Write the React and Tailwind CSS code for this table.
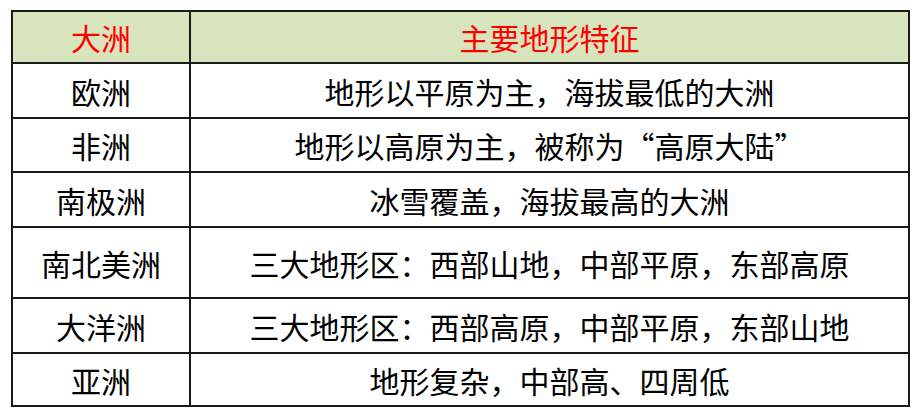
import React from "react";

const rows = [
  ["欧洲", "地形以平原为主，海拔最低的大洲", "h-[55px]"],
  ["非洲", "地形以高原为主，被称为“高原大陆”", "h-[54px]"],
  ["南极洲", "冰雪覆盖，海拔最高的大洲", "h-[55px]"],
  ["南北美洲", "三大地形区：西部山地，中部平原，东部高原", "h-[71px]"],
  ["大洋洲", "三大地形区：西部高原，中部平原，东部山地", "h-[55px]"],
  ["亚洲", "地形复杂，中部高、四周低", "h-[53px]"],
];

export default function App() {
  return (
    <div className="w-[917px] h-[416px] bg-white pt-[10px] pl-[11px]" style={{ fontFamily: '"Noto Sans CJK SC", "Noto Sans", sans-serif' }}>
      <div className="w-[899px] border-2 border-[#1a1a1a] text-[30px] leading-none text-black">
        <div className="flex h-[50px] bg-[#d8e4bc] text-[#ff0000]">
          <div className="w-[176px] flex items-center justify-center">大洲</div>
          <div className="flex-1 border-l-2 border-[#1a1a1a] flex items-center justify-center">主要地形特征</div>
        </div>
        {rows.map(([a, b, h]) => (
          <div key={a} className={`flex border-t-2 border-[#1a1a1a] ${h}`}>
            <div className="w-[176px] flex items-center justify-center">{a}</div>
            <div className="flex-1 border-l-2 border-[#1a1a1a] flex items-center justify-center">{b}</div>
          </div>
        ))}
      </div>
    </div>
  );
}
